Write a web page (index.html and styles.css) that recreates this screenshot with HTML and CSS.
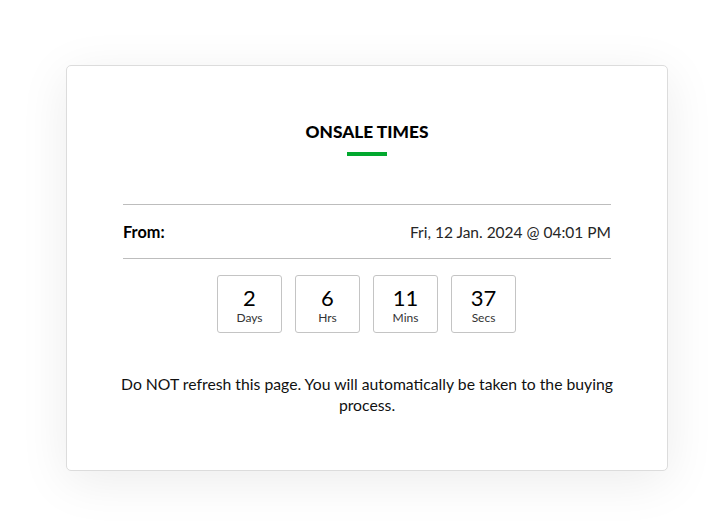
FILE: index.html
```html
<!DOCTYPE html>
<html lang="en">
<head>
<meta charset="utf-8">
<title>Onsale Times</title>
<link rel="stylesheet" href="styles.css">
</head>
<body>
<div class="page">
  <section class="card">
    <h1 class="title">ONSALE TIMES</h1>
    <div class="accent"></div>
    <div class="row">
      <span class="row-label">From:</span>
      <span class="row-value">Fri, 12 Jan. 2024 @ 04:01 PM</span>
    </div>
    <div class="countdown">
      <div class="unit"><span class="num">2</span><span class="lbl">Days</span></div>
      <div class="unit"><span class="num">6</span><span class="lbl">Hrs</span></div>
      <div class="unit"><span class="num">11</span><span class="lbl">Mins</span></div>
      <div class="unit"><span class="num">37</span><span class="lbl">Secs</span></div>
    </div>
    <p class="note">Do NOT refresh this page. You will automatically be taken to the buying process.</p>
  </section>
</div>
</body>
</html>
```
FILE: styles.css
```css
html, body {
  margin: 0;
  padding: 0;
  background: #ffffff;
}
body {
  font-family: Lato, "Noto Sans", sans-serif;
  color: #1a1a1a;
}
.page {
  padding: 65px 0 60px 66px;
}
.card {
  box-sizing: border-box;
  width: 602px;
  border: 1px solid #dcdcdc;
  border-radius: 5px;
  background: #fff;
  box-shadow: 0 10px 50px rgba(0, 0, 0, 0.08);
  padding: 56px 56px 55px;
  display: flex;
  flex-direction: column;
  align-items: center;
}
.title {
  margin: 0;
  font-size: 17.3px;
  line-height: 20px;
  font-weight: 900;
  color: #000;
  letter-spacing: 0;
}
.accent {
  width: 40px;
  height: 4px;
  background: #02a82e;
  margin-top: 10px;
}
.row {
  align-self: stretch;
  margin-top: 48px;
  border-top: 1px solid #bdbdbd;
  border-bottom: 1px solid #bdbdbd;
  padding: 17px 0 16px;
  display: flex;
  justify-content: space-between;
  align-items: baseline;
  line-height: 20px;
}
.row-label {
  font-size: 16.3px;
  font-weight: 700;
  color: #000;
}
.row-value {
  font-size: 15.5px;
  color: #262626;
}
.countdown {
  display: flex;
  gap: 13px;
  margin-top: 16px;
  margin-right: 1px;
}
.unit {
  box-sizing: border-box;
  width: 65px;
  height: 58px;
  border: 1px solid #c4c4c4;
  border-radius: 3px;
  display: flex;
  flex-direction: column;
  align-items: center;
  padding-top: 9px;
}
.num {
  font-size: 22px;
  line-height: 26px;
  color: #000;
}
.lbl {
  font-size: 12px;
  line-height: 14px;
  color: #333;
}
.note {
  align-self: stretch;
  margin: 40px -8px 0;
  font-size: 15.75px;
  line-height: 21px;
  text-align: center;
  color: #111;
}
```
